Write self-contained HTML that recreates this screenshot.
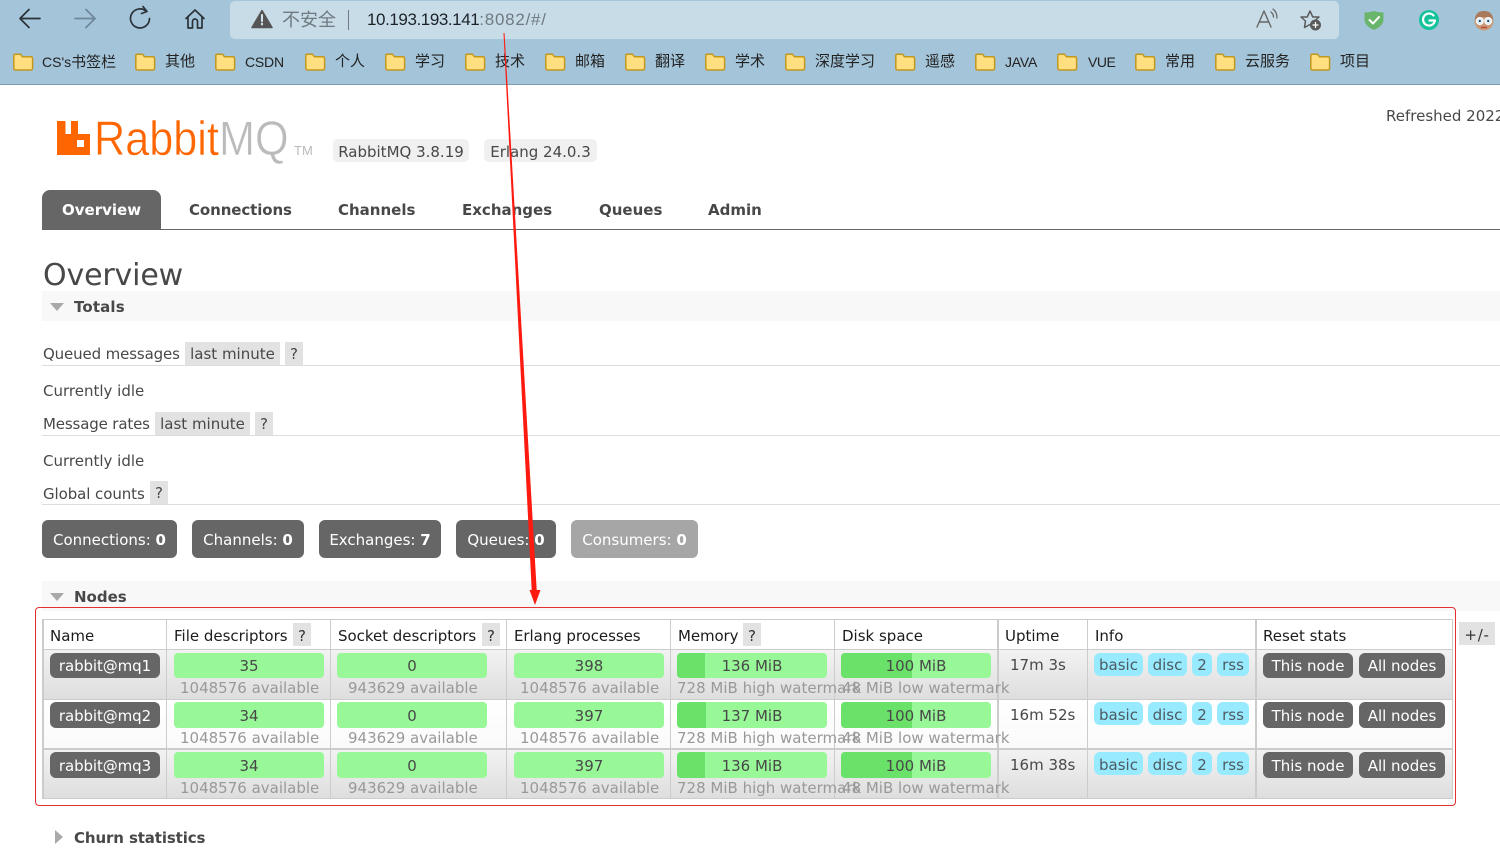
<!DOCTYPE html>
<html><head><meta charset="utf-8"><title>RabbitMQ Management</title>
<style>
html,body{margin:0;padding:0;width:1500px;height:859px;overflow:hidden;background:#fff}
body{position:relative;font:15px/20px "DejaVu Sans","Noto Sans CJK SC",sans-serif;color:#484848}
div{position:absolute;white-space:nowrap}
svg{position:absolute;overflow:hidden}
.bm{font:15px/20px "Liberation Sans","Noto Sans CJK SC",sans-serif;color:#222;top:52px}
.bm i{font-style:normal;font-size:14px}
.tab{top:200px;font-weight:bold;color:#484848}
.q{background:#e2e2e2;text-align:center;height:23px;line-height:25px}
.qh{line-height:26px;color:#333}
.hr{left:42px;width:1458px;height:1px;background:#ddd}
.sec{left:42px;width:1458px;height:30px;background:#f8f8f8}
.sh{font-weight:bold;left:74px}
.tri{width:0;height:0;border-left:7px solid transparent;border-right:7px solid transparent;border-top:8px solid #a9a9a9;left:50px}
.cnt{top:520px;height:38px;line-height:41px;background:#666;color:#fff;border-radius:6px;text-align:center}
.th{top:626px;color:#1c1c1c}
.bg1{left:43px;width:1410px;background:linear-gradient(#f2f2f2,#dedede)}
.bg2{left:43px;width:1410px;background:linear-gradient(#fff,#fafafa)}
.g{background:#ccc}
.row{left:0;width:1500px;height:50px}
.name{left:50px;width:110px;height:25px;line-height:27px;background:#666;color:#fff;border-radius:6px;text-align:center;top:0;letter-spacing:-.1px}
.bar{width:150px;height:25px;line-height:27px;background:#98f898;border-radius:4px;text-align:center;top:0}
.dk{left:0;top:0;height:25px;background:#6ae26a;border-radius:4px 0 0 4px}
.t{left:0;top:0;width:150px;text-align:center}
.sub{color:#999;top:25px;line-height:20px}
.up{left:1010px;top:2px}
.info{top:0;height:23px;line-height:24px;background:#98ebff;border-radius:6px;text-align:center;color:#4d5a62}
.btn{top:0;height:25px;line-height:27px;background:#666;color:#fff;border-radius:6px;text-align:center}
.r26 .name,.r26 .bar,.r26 .btn{height:26px;line-height:29px}
.r26 .dk{height:26px}
.r26 .t{line-height:29px}
.r26 .sub{top:26px}
.r26 .up{top:3px}
.r26 .info{line-height:26px}
</style></head><body>

<!-- browser chrome -->
<div style="left:0;top:0;width:1500px;height:84px;background:#a3c4d9"></div>
<div style="left:0;top:84px;width:1500px;height:1px;background:#7d9bb0"></div>
<div style="left:230px;top:1px;width:1109px;height:38px;background:#c8dce8;border-radius:5px"></div>

<svg style="left:0;top:0" width="300" height="40" fill="none" stroke-linecap="round" stroke-linejoin="round">
<path d="M40 18.500H20.500M29 9.500L20 18.500L29 27.500" stroke="#2b3238" stroke-width="1.700"/>
<path d="M75 18.500H94.500M86 9.500L95 18.500L86 27.500" stroke="#6f8796" stroke-width="1.700"/>
<path d="M146.500 11.500A9.500 9.500 0 1 0 149.500 18.500M143 6.500L147 11.500L141.500 13.500" stroke="#2b3238" stroke-width="1.700"/>
<path d="M186 18.500L195 10L204 18.500M188 16.500V28H192.500V21.500A2.500 2.500 0 0 1 197.500 21.500V28H202V16.500" stroke="#2b3238" stroke-width="1.700"/>
<path d="M262 10.500L272 27.500H252Z" fill="#555" stroke="#555" stroke-width="1.500"/>
<path d="M262 15V21M262 23.500V24.500" stroke="#d6e4ec" stroke-width="2"/>
</svg>
<div style="left:282px;top:10px;font:18px/20px 'Liberation Sans','Noto Sans CJK SC',sans-serif;color:#6f7a80">不安全</div>
<div style="left:348px;top:10px;width:1px;height:20px;background:#6f7a80"></div>
<div style="left:367px;top:10px;font:17px/20px 'Liberation Sans',sans-serif;letter-spacing:-.42px;color:#1c2227">10.193.193.141<span style="color:#6f7a80;letter-spacing:.75px">:8082/#/</span></div>

<svg style="left:1240px;top:0" width="260" height="40" fill="none" stroke-linecap="round" stroke-linejoin="round">
<path d="M17 27L24 11L31 27M19.500 22H28.500" stroke="#666" stroke-width="1.400"/>
<path d="M31 12Q33.500 14 33.500 17M33 9Q37 12 37 18" stroke="#666" stroke-width="1.300"/>
<path d="M70 11L72.800 17H79L74.500 21L75.500 27.500L70 24.500L64.500 27.500L65.500 21L61 17H67.200Z" stroke="#5a5a5a" stroke-width="1.500"/>
<circle cx="75.500" cy="25" r="5.500" fill="#5a5a5a"/>
<path d="M75.500 22.500V27.500M73 25H78" stroke="#fff" stroke-width="1.300"/>
<path d="M124.500 12.500Q130 12.500 134 11Q138 12.500 143.500 12.500V20Q143 26 134 30Q125 26 124.500 20Z" fill="#69b56b"/>
<path d="M129.500 20L133 23.500L139 17" stroke="#fff" stroke-width="2"/>
<circle cx="189" cy="20" r="10" fill="#15c39a"/>
<path d="M193.500 15.500A6 6 0 1 0 195 20.500H189.500" stroke="#fff" stroke-width="2.200"/>
<circle cx="244" cy="21" r="9.500" fill="#c89a78"/>
<path d="M235 20Q235 11 244 11Q253 11 253 20Q244 14 235 20Z" fill="#a8795a"/>
<circle cx="239.800" cy="21" r="3.500" fill="#dceef5" stroke="#fff"/><circle cx="248.200" cy="21" r="3.500" fill="#dceef5" stroke="#fff"/>
<circle cx="239.800" cy="21" r="1.100" fill="#345"/><circle cx="248.200" cy="21" r="1.100" fill="#345"/>
<path d="M241.500 27.500H246.500" stroke="#b84a3a" stroke-width="1.500"/>
</svg>

<!-- bookmarks -->
<svg style="left:0;top:0" width="1500" height="84" stroke="#c2981e" stroke-width="1.500" fill="#ffdf80">
<path id="f" d="M13.800 55.500V68Q13.800 70 15.800 70H30.600Q32.600 70 32.600 68V58.500Q32.600 56.800 30.600 56.800H22.500L20.500 54.200H15.300Q13.800 54.200 13.800 55.500Z"/>
<use href="#f" x="122"/><use href="#f" x="202"/><use href="#f" x="292"/><use href="#f" x="372"/><use href="#f" x="452"/><use href="#f" x="532"/><use href="#f" x="612"/><use href="#f" x="692"/><use href="#f" x="772"/><use href="#f" x="882"/><use href="#f" x="962"/><use href="#f" x="1044"/><use href="#f" x="1122"/><use href="#f" x="1202"/><use href="#f" x="1297"/>
</svg>
<div class="bm" style="left:42px"><i>CS's</i>书签栏</div>
<div class="bm" style="left:165px">其他</div>
<div class="bm" style="left:245px"><i style="letter-spacing:-.2px">CSDN</i></div>
<div class="bm" style="left:335px">个人</div>
<div class="bm" style="left:415px">学习</div>
<div class="bm" style="left:495px">技术</div>
<div class="bm" style="left:575px">邮箱</div>
<div class="bm" style="left:655px">翻译</div>
<div class="bm" style="left:735px">学术</div>
<div class="bm" style="left:815px">深度学习</div>
<div class="bm" style="left:925px">遥感</div>
<div class="bm" style="left:1005px"><i style="letter-spacing:-.2px">JAVA</i></div>
<div class="bm" style="left:1088px"><i style="letter-spacing:-.5px">VUE</i></div>
<div class="bm" style="left:1165px">常用</div>
<div class="bm" style="left:1245px">云服务</div>
<div class="bm" style="left:1340px">项目</div>

<!-- header -->
<svg style="left:0;top:0" width="100" height="170"><path fill="#f60" fill-rule="evenodd" d="M57 121H65.500V134H71V121H78V134H90V155H57ZM77 140V147H84V140Z"/></svg>
<div style="left:94px;top:113px;font:48px/54px 'Liberation Sans',sans-serif;color:#f60;-webkit-text-stroke:.5px #fff;transform-origin:0 0;transform:scaleX(.9)">Rabbit</div>
<div style="left:219px;top:113px;font:48px/54px 'Liberation Sans',sans-serif;color:#bbb;-webkit-text-stroke:.5px #fff;transform-origin:0 0;transform:scaleX(.9)">MQ</div>
<div style="left:294px;top:145px;font:13px/12px 'Liberation Sans',sans-serif;color:#bbb">TM</div>
<div style="left:333px;top:139px;width:136px;height:23px;line-height:27px;background:#f0f0f0;border-radius:5px;text-align:center">RabbitMQ 3.8.19</div>
<div style="left:484px;top:139px;width:113px;height:23px;line-height:27px;background:#f0f0f0;border-radius:5px;text-align:center">Erlang 24.0.3</div>
<div style="left:1386px;top:106px;width:114px;height:20px;overflow:hidden">Refreshed 2022-07-07</div>

<div style="left:42px;top:229px;width:1458px;height:1px;background:#666"></div>
<div style="left:42px;top:190px;width:119px;height:39px;background:#666;border-radius:8px 8px 0 0"></div>
<div class="tab" style="left:62px;color:#fff">Overview</div>
<div class="tab" style="left:189px;letter-spacing:-.1px">Connections</div>
<div class="tab" style="left:338px">Channels</div>
<div class="tab" style="left:462px">Exchanges</div>
<div class="tab" style="left:599px">Queues</div>
<div class="tab" style="left:708px">Admin</div>

<div style="left:43px;top:258px;font-size:30px;line-height:36px;letter-spacing:-.15px">Overview</div>
<div class="sec" style="top:291px"></div>
<div class="tri" style="top:303px"></div>
<div class="sh" style="top:297px;letter-spacing:.15px">Totals</div>

<div style="left:43px;top:344px;letter-spacing:-.13px">Queued messages</div>
<div class="q" style="left:185px;top:342px;width:95px">last minute</div>
<div class="q" style="left:285px;top:342px;width:18px;line-height:24px">?</div>
<div class="hr" style="top:365px"></div>
<div style="left:43px;top:381px">Currently idle</div>
<div style="left:43px;top:414px;letter-spacing:-.15px">Message rates</div>
<div class="q" style="left:155px;top:412px;width:95px">last minute</div>
<div class="q" style="left:255px;top:412px;width:18px;line-height:24px">?</div>
<div class="hr" style="top:435px"></div>
<div style="left:43px;top:451px">Currently idle</div>
<div style="left:43px;top:484px;letter-spacing:-.08px">Global counts</div>
<div class="q" style="left:150px;top:481px;width:18px;line-height:24px">?</div>
<div class="hr" style="top:504px"></div>

<div class="cnt" style="left:42px;width:135px">Connections: <b>0</b></div>
<div class="cnt" style="left:192px;width:112px">Channels: <b>0</b></div>
<div class="cnt" style="left:319px;width:122px">Exchanges: <b>7</b></div>
<div class="cnt" style="left:456px;width:100px">Queues: <b>0</b></div>
<div class="cnt" style="left:571px;width:127px;background:#a6a6a6">Consumers: <b>0</b></div>

<div class="sec" style="top:581px"></div>
<div class="tri" style="top:593px"></div>
<div class="sh" style="top:587px">Nodes</div>

<!-- table -->
<div style="left:42px;top:619px;width:1411px;height:30px;background:#fff"></div>
<div class="bg1" style="top:650px;height:49px"></div>
<div class="bg2" style="top:700px;height:48px"></div>
<div class="bg1" style="top:750px;height:48px"></div>
<div class="g" style="left:42px;top:619px;width:1411px;height:1px"></div>
<div class="g" style="left:42px;top:649px;width:1411px;height:1px"></div>
<div class="g" style="left:42px;top:699px;width:1411px;height:1px"></div>
<div class="g" style="left:42px;top:748px;width:1411px;height:2px"></div>
<div class="g" style="left:42px;top:798px;width:1411px;height:1px"></div>
<div class="g" style="left:42px;top:619px;width:2px;height:180px"></div>
<div class="g" style="left:166px;top:619px;width:1px;height:180px"></div>
<div class="g" style="left:330px;top:619px;width:1px;height:180px"></div>
<div class="g" style="left:506px;top:619px;width:1px;height:180px"></div>
<div class="g" style="left:670px;top:619px;width:1px;height:180px"></div>
<div class="g" style="left:834px;top:619px;width:1px;height:180px"></div>
<div class="g" style="left:997px;top:619px;width:2px;height:180px"></div>
<div class="g" style="left:1087px;top:619px;width:1px;height:180px"></div>
<div class="g" style="left:1255px;top:619px;width:2px;height:180px"></div>
<div class="g" style="left:1452px;top:619px;width:1px;height:180px"></div>

<div class="th" style="left:50px">Name</div>
<div class="th" style="left:174px">File descriptors</div>
<div class="q qh" style="left:293px;top:623px;width:18px">?</div>
<div class="th" style="left:338px;letter-spacing:-.03px">Socket descriptors</div>
<div class="q qh" style="left:482px;top:623px;width:18px">?</div>
<div class="th" style="left:514px;letter-spacing:-.06px">Erlang processes</div>
<div class="th" style="left:678px;letter-spacing:-.1px">Memory</div>
<div class="q qh" style="left:743px;top:623px;width:18px">?</div>
<div class="th" style="left:842px">Disk space</div>
<div class="th" style="left:1005px">Uptime</div>
<div class="th" style="left:1095px">Info</div>
<div class="th" style="left:1263px">Reset stats</div>
<div class="q qh" style="left:1459px;top:622px;width:36px;letter-spacing:.7px">+/-</div>

<!-- row 1 -->
<div class="row" style="top:653px">
<div class="name">rabbit@mq1</div>
<div class="bar" style="left:174px">35</div><div class="sub" style="left:180px">1048576 available</div>
<div class="bar" style="left:337px">0</div><div class="sub" style="left:348px">943629 available</div>
<div class="bar" style="left:514px">398</div><div class="sub" style="left:520px">1048576 available</div>
<div class="bar" style="left:677px"><div class="dk" style="width:28px"></div><div class="t">136 MiB</div></div>
<div class="sub" style="left:677px">728 MiB high watermark</div>
<div class="bar" style="left:841px"><div class="dk" style="width:71px"></div><div class="t">100 MiB</div></div>
<div class="sub" style="left:842px">48 MiB low watermark</div>
<div class="up">17m 3s</div>
<div class="info" style="left:1094px;width:49px">basic</div><div class="info" style="left:1148px;width:39px">disc</div><div class="info" style="left:1192px;width:20px">2</div><div class="info" style="left:1217px;width:32px">rss</div>
<div class="btn" style="left:1263px;width:90px">This node</div><div class="btn" style="left:1359px;width:86px">All nodes</div>
</div>
<!-- row 2 -->
<div class="row r26" style="top:702px">
<div class="name">rabbit@mq2</div>
<div class="bar" style="left:174px">34</div><div class="sub" style="left:180px">1048576 available</div>
<div class="bar" style="left:337px">0</div><div class="sub" style="left:348px">943629 available</div>
<div class="bar" style="left:514px">397</div><div class="sub" style="left:520px">1048576 available</div>
<div class="bar" style="left:677px"><div class="dk" style="width:29px"></div><div class="t">137 MiB</div></div>
<div class="sub" style="left:677px">728 MiB high watermark</div>
<div class="bar" style="left:841px"><div class="dk" style="width:71px"></div><div class="t">100 MiB</div></div>
<div class="sub" style="left:842px">48 MiB low watermark</div>
<div class="up">16m 52s</div>
<div class="info" style="left:1094px;width:49px">basic</div><div class="info" style="left:1148px;width:39px">disc</div><div class="info" style="left:1192px;width:20px">2</div><div class="info" style="left:1217px;width:32px">rss</div>
<div class="btn" style="left:1263px;width:90px">This node</div><div class="btn" style="left:1359px;width:86px">All nodes</div>
</div>
<!-- row 3 -->
<div class="row r26" style="top:752px">
<div class="name">rabbit@mq3</div>
<div class="bar" style="left:174px">34</div><div class="sub" style="left:180px">1048576 available</div>
<div class="bar" style="left:337px">0</div><div class="sub" style="left:348px">943629 available</div>
<div class="bar" style="left:514px">397</div><div class="sub" style="left:520px">1048576 available</div>
<div class="bar" style="left:677px"><div class="dk" style="width:28px"></div><div class="t">136 MiB</div></div>
<div class="sub" style="left:677px">728 MiB high watermark</div>
<div class="bar" style="left:841px"><div class="dk" style="width:71px"></div><div class="t">100 MiB</div></div>
<div class="sub" style="left:842px">48 MiB low watermark</div>
<div class="up">16m 38s</div>
<div class="info" style="left:1094px;width:49px">basic</div><div class="info" style="left:1148px;width:39px">disc</div><div class="info" style="left:1192px;width:20px">2</div><div class="info" style="left:1217px;width:32px">rss</div>
<div class="btn" style="left:1263px;width:90px">This node</div><div class="btn" style="left:1359px;width:86px">All nodes</div>
</div>

<div class="tri" style="left:55px;top:830px;border:0;border-top:7px solid transparent;border-bottom:7px solid transparent;border-left:8px solid #a9a9a9"></div>
<div class="sh" style="top:828px;letter-spacing:-.12px">Churn statistics</div>

<!-- annotations -->
<div style="left:35px;top:607px;width:1419px;height:197px;border:1px solid #e53030;border-radius:4px"></div>
<svg style="left:0;top:0" width="1500" height="859"><path fill="#ff1a10" d="M503.500 33L504.500 33L536.700 590L540.500 590L535 605L529.500 590L531.700 590Z"/></svg>
</body></html>
